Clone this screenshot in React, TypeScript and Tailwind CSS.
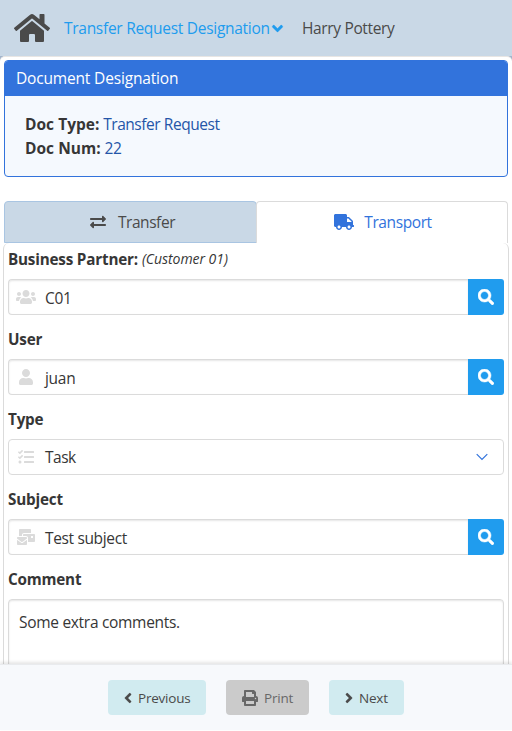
import type { ReactNode } from 'react';
import {
  FaHome, FaAngleDown, FaExchangeAlt, FaTruck, FaUsers, FaUser, FaTasks,
  FaMailBulk, FaSearch, FaAngleLeft, FaAngleRight, FaPrint,
} from 'react-icons/fa';

function Field({ label, hint, children }: { label: ReactNode; hint?: ReactNode; children: ReactNode }) {
  return (
    <div className="h-20">
      <div className="flex h-9 items-center whitespace-nowrap pb-1 text-[15.25px] font-bold tracking-[-0.2px] text-[#363636]">
        {label}
        {hint}
      </div>
      {children}
    </div>
  );
}

function SearchInput({ icon, value }: { icon: ReactNode; value: ReactNode }) {
  return (
    <div className="flex h-9">
      <div className="flex flex-1 items-center rounded-l border border-r-0 border-[#dbdbdb] bg-white shadow-[inset_0_1px_2px_rgba(10,10,10,0.1)]">
        <span className="mr-[3px] flex w-[33px] shrink-0 justify-center text-[#dbdbdb]">{icon}</span>
        <span className="pt-px text-[#363636]">{value}</span>
      </div>
      <button className="flex w-9 items-center justify-center rounded-r-[3px] bg-[#209cee] text-white">
        <FaSearch size={16} stroke="currentColor" strokeWidth={16} />
      </button>
    </div>
  );
}

export default function App() {
  return (
    <div className="flex h-[731px] w-[512px] flex-col overflow-hidden bg-white font-['Open_Sans','Noto_Sans',sans-serif] text-[15.5px] leading-6 tracking-[-0.3px] text-[#363636]">
      <header className="flex h-14 shrink-0 items-center bg-[#c9d8e6] pl-[14px]">
        <FaHome className="h-9 w-9 text-[#4a4a4a]" />
        <div className="ml-[14px] flex w-[238px] items-center whitespace-nowrap text-[#209cee]">
          <span className="tracking-[-0.28px]">Transfer Request Designation</span>
          <FaAngleDown size={17} stroke="currentColor" strokeWidth={8} className="-ml-px" />
        </div>
        <span className="tracking-[-0.35px] text-[#4a4a4a]">Harry Pottery</span>
      </header>

      <div className="shrink-0 bg-[#a3b5cc]">
        <main className="h-[608px] overflow-hidden rounded-t-[5px] border-t border-[#e8e6e4] bg-white">
          <section className="mx-1 mt-[3px] h-[117px] overflow-hidden rounded border border-[#3273dc] bg-[#f5f9fe]">
            <h1 className="flex h-[35px] items-center bg-[#3273dc] pb-px pl-[11px] tracking-[-0.17px] text-white">Document Designation</h1>
            <div className="pl-5 pt-4">
              <p><strong className="tracking-[0.02px]">Doc Type:</strong> <span className="tracking-[-0.45px] text-[#2455a8]">Transfer Request</span></p>
              <p><strong className="tracking-[0.02px]">Doc Num:</strong> <span className="text-[#2455a8]">22</span></p>
            </div>
          </section>

          <nav className="mx-1 mt-6 flex h-[42px]">
            <div className="flex w-[253px] items-center justify-center gap-3 rounded-t border border-[#a9c5e2] bg-[#c9d8e6] pl-1 text-[#4a4a4a]">
              <FaExchangeAlt size={16} />
              <span className="tracking-[-0.45px]">Transfer</span>
            </div>
            <div className="-ml-px flex flex-1 items-center justify-center gap-[10px] rounded-t border border-b-0 border-[#dbdbdb] pb-px pl-[2px] text-[#3273dc]">
              <FaTruck size={20} className="h-4" />
              <span className="tracking-[-0.4px]">Transport</span>
            </div>
          </nav>

          <section className="mx-[3px] h-[430px] rounded-t-md border border-t-0 border-[#dbdbdb] px-1">
            <Field
              label="Business Partner:"
              hint={<em className="ml-1 text-[14px] font-normal tracking-[-0.05px]">(Customer 01)</em>}
            >
              <SearchInput icon={<FaUsers size={20} />} value="C01" />
            </Field>
            <Field label="User">
              <SearchInput icon={<FaUser size={16} />} value="juan" />
            </Field>
            <Field label="Type">
              <div className="flex h-9 items-center rounded border border-[#dbdbdb] bg-white">
                <span className="mr-[3px] flex w-[33px] shrink-0 justify-center text-[#dbdbdb]"><FaTasks size={16} /></span>
                <span className="flex-1 tracking-[-0.5px]">Task</span>
                <svg viewBox="0 0 12 8" className="mr-[15px] h-2 w-3 text-[#3273dc]" fill="none" stroke="currentColor" strokeWidth="1.2">
                  <path d="M.7 1.2 6 6.5l5.300-5.300" />
                </svg>
              </div>
            </Field>
            <Field label="Subject">
              <SearchInput icon={<FaMailBulk size={18} />} value={<span className="tracking-[-0.35px]">Test subject</span>} />
            </Field>
            <Field label="Comment">
              <div className="h-[100px] rounded border border-[#dbdbdb] px-[10px] pt-[10px] shadow-[inset_0_1px_2px_rgba(10,10,10,0.1)]">
                Some extra comments.
              </div>
            </Field>
          </section>
        </main>
      </div>

      <footer className="relative flex h-[66px] shrink-0 items-start justify-center gap-5 border-t border-[#e9ebee] bg-[#f7f9fc] pt-[15px] text-[13.5px] tracking-[-0.22px] text-[#4a4a4a] shadow-[0_-2px_3px_rgba(10,10,10,0.1)]">
        <button className="flex h-[35px] w-[98px] items-center rounded bg-[#d1ebf0] pl-3">
          <FaAngleLeft size={16} stroke="currentColor" strokeWidth={6} className="mr-[2px]" />
          <span>Previous</span>
        </button>
        <button className="flex h-[35px] w-[83px] items-center rounded bg-[#cbcbcb] pl-4 text-[#686868]">
          <FaPrint size={16} className="mr-1.5" />
          <span>Print</span>
        </button>
        <button className="flex h-[35px] w-[75px] items-center rounded bg-[#d1ebf0] pl-3">
          <FaAngleRight size={16} stroke="currentColor" strokeWidth={6} className="mr-[2px]" />
          <span>Next</span>
        </button>
      </footer>
    </div>
  );
}
